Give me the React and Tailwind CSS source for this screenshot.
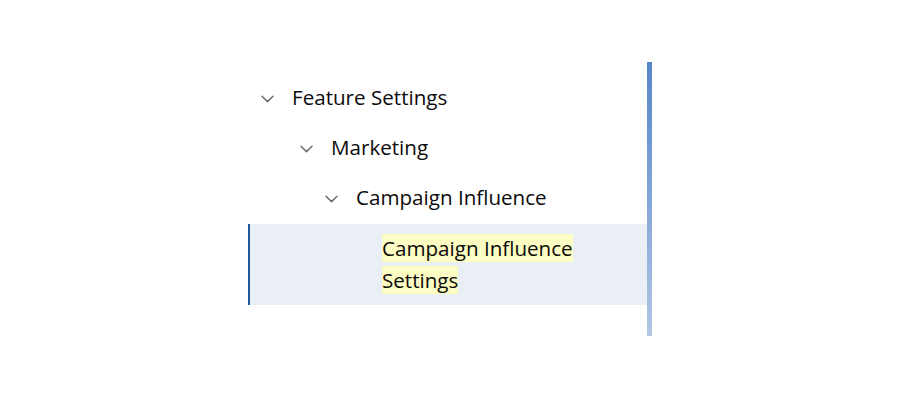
import { useState } from "react";

const ROWS = [
  { id: "feature", label: "Feature Settings", pad: "pl-[13px]" },
  { id: "marketing", label: "Marketing", pad: "pl-[52px]" },
  { id: "campaign", label: "Campaign Influence", pad: "pl-[77px]" },
];

function Chevron() {
  return (
    <svg width="13" height="8" viewBox="0 0 13 8" className="shrink-0">
      <path d="M1 1.2 L6.5 6.6 L12 1.2" fill="none" stroke="#6b6d70" strokeWidth="1.5" strokeLinecap="round" strokeLinejoin="round" />
    </svg>
  );
}

export default function App() {
  const [selected] = useState("cis");

  return (
    <div className="w-[900px] h-[400px] bg-white flex justify-start" style={{ fontFamily: "'Open Sans', 'Noto Sans', sans-serif" }}>
      <div className="ml-[248px] mt-[62px] flex h-[274px]">
        {/* Tree */}
        <div className="w-[399px] pt-[12px] text-[20.6px] text-[#0c0b0b] [font-variant-ligatures:none]">
          {ROWS.map(({ id, label, pad }) => (
            <div key={id} className={`h-[50px] flex items-center gap-[18px] ${pad}`}>
              <Chevron />
              <span className="leading-none -mt-[3px]">{label}</span>
            </div>
          ))}

          <div
            className={`h-[81px] flex items-center pl-[132px] border-l-2 ${
              selected === "cis" ? "bg-[#e9eff4] border-[#1c5a9c]" : "border-transparent"
            }`}
          >
            <span className="max-w-[240px] leading-[32px] -mt-[2px]">
              <mark className="bg-[#fdfcc2] text-[#0c0b0b] box-decoration-clone">
                Campaign Influence Settings
              </mark>
            </span>
          </div>
        </div>

        {/* Scrollbar */}
        <div className="w-[5px] h-full bg-gradient-to-b from-[#5686c8] to-[#b2c6e5]" />
      </div>
    </div>
  );
}
